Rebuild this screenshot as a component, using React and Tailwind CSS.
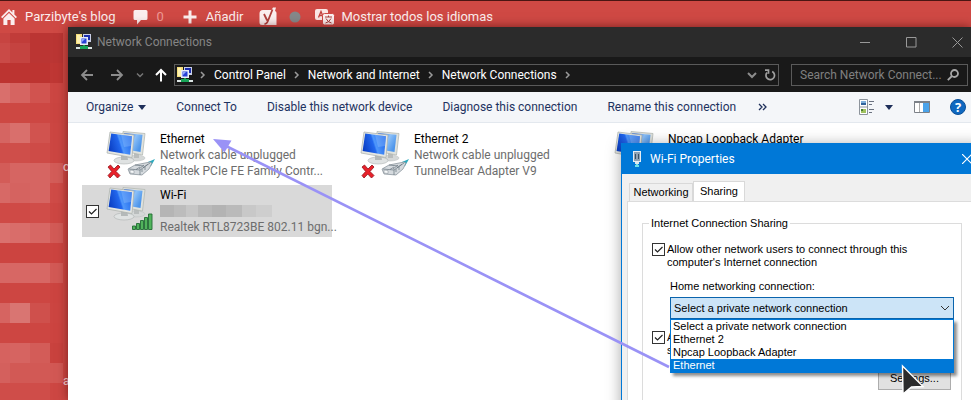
import React from 'react';

const mosaic = [
  ['h-[10px]', 'bg-[#c74441]', 'bg-[#c13c39]', 'bg-[#bb3533]', 'bg-[#bb3634]'],
  ['h-[20px]', 'bg-[#ca4a47]', 'bg-[#c54340]', 'bg-[#bb3533]', 'bg-[#bb3634]'],
  ['h-[20px]', 'bg-[#bd3431]', 'bg-[#bd3431]', 'bg-[#bd3431]', 'bg-[#bf3734]'],
  ['h-[20px]', 'bg-[#d96f6c]', 'bg-[#d66461]', 'bg-[#d1534f]', 'bg-[#cc4642]'],
  ['h-[20px]', 'bg-[#cd4843]', 'bg-[#cd4843]', 'bg-[#cd4743]', 'bg-[#cb4541]'],
  ['h-[20px]', 'bg-[#d56562]', 'bg-[#d96f6c]', 'bg-[#d1534f]', 'bg-[#cc4642]'],
  ['h-[20px]', 'bg-[#cf4e4a]', 'bg-[#cf4e4a]', 'bg-[#ce4b47]', 'bg-[#cc4642]'],
  ['h-[20px]', 'bg-[#d35c58]', 'bg-[#d66562]', 'bg-[#d66562]', 'bg-[#d35c58]'],
  ['h-[20px]', 'bg-[#d76966]', 'bg-[#d56360]', 'bg-[#d66562]', 'bg-[#cf4b47]'],
  ['h-[20px]', 'bg-[#cf4a46]', 'bg-[#cf4a46]', 'bg-[#d04d49]', 'bg-[#cd4743]'],
  ['h-[20px]', 'bg-[#da716e]', 'bg-[#d96d6a]', 'bg-[#d76764]', 'bg-[#d25a56]'],
  ['h-[20px]', 'bg-[#cc4440]', 'bg-[#cc4440]', 'bg-[#cc4440]', 'bg-[#cc4440]'],
  ['h-[20px]', 'bg-[#d76764]', 'bg-[#d76764]', 'bg-[#d76764]', 'bg-[#d25955]'],
  ['h-[20px]', 'bg-[#cc4541]', 'bg-[#cd4642]', 'bg-[#cd4642]', 'bg-[#cc4440]'],
  ['h-[20px]', 'bg-[#d66461]', 'bg-[#d97572]', 'bg-[#cf504c]', 'bg-[#cc4541]'],
  ['h-[20px]', 'bg-[#cd4743]', 'bg-[#cd4642]', 'bg-[#cd4642]', 'bg-[#cc4440]'],
  ['h-[20px]', 'bg-[#d6625f]', 'bg-[#d66461]', 'bg-[#d35c58]', 'bg-[#c9423e]'],
  ['h-[20px]', 'bg-[#d4605d]', 'bg-[#d25955]', 'bg-[#d25955]', 'bg-[#d25854]'],
  ['h-[20px]', 'bg-[#cf4d49]', 'bg-[#cf4d49]', 'bg-[#cf4d49]', 'bg-[#cd4743]'],
];

const edgeText = { 7: 'os', 17: 'a' };

const Mosaic = () => (
  <div className="w-[68px] shrink-0 pt-[6px]">
    {mosaic.map(([height, a, b, c, d], i) => (
      <div key={i} className={`flex ${height}`}>
        <div className={`w-[10px] ${a}`} />
        <div className={`w-[20px] ${b}`} />
        <div className={`w-[20px] ${c}`} />
        <div className={`w-[13px] ${d}`} />
        <div className={`w-[5px] text-xs text-red-100 ${i === 7 ? 'leading-[8px]' : 'leading-9'}`}>{edgeText[i]}</div>
      </div>
    ))}
  </div>
);

const AdminBar = () => (
  <header className="flex h-[27px] items-start border-t border-[#4a1512] pt-[7px] pl-px text-[13px] leading-[18px] text-[#fbeeee]">
    <a href="#home" className="flex items-center gap-2">
      <svg className="h-4 w-4" viewBox="0 0 16 16" fill="currentColor">
        <path d="M8 0 0 8l1.3 1.2L8 2.6l6.700 6.600L16 8l-2.600-2.600V1h-2v2.400z" />
        <path d="M8 4 2.400 9.600V16h4v-5h3.200v5h4V9.600z" />
      </svg>
      Parzibyte's blog
    </a>
    <a href="#comments" className="ml-[17px] flex items-center gap-2 text-[#ef9a96]">
      <svg className="h-4 w-4" viewBox="0 0 16 16" fill="#fbeeee">
        <path d="M2 1h11q1.500 0 1.500 1.500v7q0 1.500-1.500 1.500H8l-4 4.500V11H2Q.5 11 .5 9.500v-7Q.5 1 2 1z" />
      </svg>
      0
    </a>
    <a href="#new" className="ml-[18px] flex items-center gap-2">
      <svg className="h-4 w-4" viewBox="0 0 16 16" fill="currentColor">
        <path d="M6.500 1.500h3v5h5v3h-5v5h-3v-5h-5v-3h5z" />
      </svg>
      Añadir
    </a>
    <a href="#seo" aria-label="SEO" className="ml-4 flex h-[18px] items-center gap-3">
      <svg className="h-[20px] w-[18px]" viewBox="0 0 18 20">
        <path d="M4 3h8.500L14 .5h3L16 4q1.500.6 1.500 2v12H3q-2.500 0-2.500-2.500v-9Q.5 3 4 3z" fill="#fbeeee" />
        <path d="M5 7l3.200 6.500M13.500 2.500 8.700 14.500q-1 2.500-3.200 2.500" fill="none" stroke="#b0403c" strokeWidth="1.800" />
      </svg>
      <svg className="h-[12px] w-[12px]" viewBox="0 0 12 12">
        <circle cx="6" cy="6" r="5.500" fill="#85888a" />
      </svg>
    </a>
    <a href="#languages" className="ml-[14px] flex items-center gap-[6px]">
      <svg className="h-4 w-5" viewBox="0 0 20 16">
        <rect x="0" y="0" width="13" height="11" rx="2" fill="#fbe6e4" />
        <path d="M3.500 8.500 6 2.500 8.500 8.500M4.500 6.500h3" fill="none" stroke="#c2413d" strokeWidth="1.300" />
        <rect x="7.500" y="4.500" width="12" height="11.500" rx="2" fill="#fbeeee" stroke="#cf4944" />
        <path d="M10 8h7M13.500 6.500V8M11 9.500q2 4 5.500 4.500M16 9.500q-2 4-5.500 4.500" fill="none" stroke="#a83c39" />
      </svg>
      Mostrar todos los idiomas
    </a>
  </header>
);

const NetworkIcon = () => (
  <svg className="h-4 w-4 shrink-0" viewBox="0 0 16 16">
    <path d="M0 0h6v10H0z" fill="#f6df7c" />
    <path d="M1 1h3v8H1z" fill="#fdf1b0" />
    <rect x="7" y="0" width="8" height="8" fill="#c9cfe6" />
    <rect x="8" y="1" width="6" height="5" fill="#1c2fae" />
    <rect x="4" y="3" width="8" height="8" fill="#e8ecf7" />
    <rect x="5.500" y="4.500" width="5" height="5" fill="#2740d4" />
    <path d="M6 5h3L6 8z" fill="#8fa6ff" />
    <path d="M7 11h2v2H7z" fill="#16a34a" />
    <path d="M4 12h8v3H4z" fill="#18a558" />
    <path d="M0 13h4v2H0zM12 13h4v2h-4z" fill="#dce5e4" />
  </svg>
);

const Chevron = () => (
  <svg className="h-2 w-2 shrink-0" viewBox="0 0 8 8" fill="none" stroke="#9a9a9a" strokeWidth="1.500">
    <path d="M2 1l3 3-3 3" />
  </svg>
);

const TitleBar = () => (
  <div className="flex h-[30px] items-center bg-[#2b2b2b] pl-2 pr-[8px] text-[#858585]">
    <NetworkIcon />
    <h1 className="ml-[5px] flex-1">Network Connections</h1>
    <div className="flex gap-[35px]">
      <button aria-label="Minimize">
        <svg className="h-[11px] w-[11px]" viewBox="0 0 11 11" stroke="#999" fill="none"><path d="M0 5.500h10" /></svg>
      </button>
      <button aria-label="Maximize">
        <svg className="h-[11px] w-[11px]" viewBox="0 0 11 11" stroke="#999" fill="none"><path d="M.5.5h9.500v9.500H.5z" /></svg>
      </button>
      <button aria-label="Close">
        <svg className="h-[11px] w-[11px]" viewBox="0 0 11 11" stroke="#999" fill="none"><path d="M.5.5l10 10M10.500.5l-10 10" /></svg>
      </button>
    </div>
  </div>
);

const NavBar = () => (
  <div className="flex h-[35px] items-center bg-[#191919] pl-[12px] pr-[3px] text-white">
    <button aria-label="Back">
      <svg className="h-[14px] w-[14px]" viewBox="0 0 14 14" fill="none" stroke="#8c8c8c" strokeWidth="1.800"><path d="M13 7H2M7 2 2 7l5 5" /></svg>
    </button>
    <button aria-label="Forward" className="ml-4">
      <svg className="h-[14px] w-[14px]" viewBox="0 0 14 14" fill="none" stroke="#8c8c8c" strokeWidth="1.800"><path d="M1 7h11M7 2l5 5-5 5" /></svg>
    </button>
    <button aria-label="Recent locations" className="ml-3">
      <svg className="h-2 w-2" viewBox="0 0 8 8" fill="none" stroke="#777" strokeWidth="1.500"><path d="M1 2.500l3 3 3-3" /></svg>
    </button>
    <button aria-label="Up" className="ml-[10px]">
      <svg className="h-[14px] w-[14px]" viewBox="0 0 14 14" fill="none" stroke="#fff" strokeWidth="2"><path d="M7 13.500V2M2 7l5-5 5 5" /></svg>
    </button>
    <nav className="ml-[6px] flex h-[22px] min-w-0 flex-1 items-center border border-[#5a5a5a] pl-[2px] pr-[2px]">
      <NetworkIcon />
      <div className="ml-[6px] flex flex-1 items-center gap-[7px] whitespace-nowrap">
        <Chevron />
        <a href="#control-panel">Control Panel</a>
        <Chevron />
        <a href="#network">Network and Internet</a>
        <Chevron />
        <a href="#connections">Network Connections</a>
        <Chevron />
      </div>
      <button aria-label="Previous locations">
        <svg className="h-[10px] w-[10px]" viewBox="0 0 10 10" fill="none" stroke="#8c8c8c" strokeWidth="2"><path d="M1 3l4 4 4-4" /></svg>
      </button>
      <button aria-label="Refresh" className="ml-[7px]">
        <svg className="h-3 w-3" viewBox="0 0 12 12" fill="none" stroke="#a0a0a0" strokeWidth="1.700"><path d="M8.200 2.500A4.300 4.300 0 1 1 3 3.500M1 1.200h3.500v3.600" /></svg>
      </button>
    </nav>
    <div className="ml-3 flex h-[22px] w-[177px] items-center border border-[#5a5a5a] px-2">
      <input aria-label="Search Network Connections" placeholder="Search Network Connect..." className="min-w-0 flex-1 bg-transparent outline-none placeholder:text-[#808080]" />
      <svg className="h-3 w-3 shrink-0" viewBox="0 0 12 12" fill="none" stroke="#a8a8a8" strokeWidth="1.800"><circle cx="7.500" cy="4.500" r="3.500" /><path d="M5 7 .8 11.200" /></svg>
    </div>
  </div>
);

const CaretDown = () => (
  <svg className="h-[5px] w-2" viewBox="0 0 8 5" fill="#1e2f5a"><path d="M0 0h8L4 5z" /></svg>
);

const CommandBar = () => (
  <div className="flex h-[31px] items-center justify-between border-b border-[#e3e8ee] bg-[#f4f6f9] pl-[18px] pr-[5px] text-[#1e3260] whitespace-nowrap">
    <div className="flex items-center gap-[30px]">
      <button className="flex items-center gap-[5px]">Organize <CaretDown /></button>
      <button>Connect To</button>
      <button>Disable this network device</button>
      <button>Diagnose this connection</button>
      <button>Rename this connection</button>
      <button aria-label="More commands">
        <svg className="-ml-2 h-2 w-[9px]" viewBox="0 0 9 8" fill="none" stroke="#1e2f5a" strokeWidth="1.300"><path d="M1 1l3 3-3 3M5 1l3 3-3 3" /></svg>
      </button>
    </div>
    <div className="flex items-center">
      <button aria-label="Change your view" className="flex items-center gap-[10px]">
        <svg className="h-4 w-4" viewBox="0 0 16 16">
          <path d="M.5.5h8v15h-8zM.5 8h8" fill="#fff" stroke="#8d949c" />
          <rect x="2" y="2" width="5" height="4" fill="#7fb0dc" />
          <path d="M2 4h5v2H2z" fill="#31639c" />
          <rect x="2" y="10" width="5" height="4" fill="#9fc25e" />
          <path d="M2 10h2v2H2z" fill="#4a7a2e" />
          <path d="M10 2.500h5M10 5.500h3M10 10.500h5M10 13.500h3" stroke="#6b7280" />
        </svg>
        <CaretDown />
      </button>
      <button aria-label="Preview pane" className="ml-[21px]">
        <svg className="h-3 w-4" viewBox="0 0 16 12">
          <path d="M.5.5h15v11H.5z" fill="#fff" stroke="#7c8188" />
          <path d="M0 0h16v2H0z" fill="#7c8188" />
          <path d="M5.500 2v9" stroke="#aaa" />
          <path d="M9 2h6v9H9z" fill="#4aa3ea" />
        </svg>
      </button>
      <button aria-label="Help" className="ml-5">
        <svg className="h-4 w-4" viewBox="0 0 16 16">
          <circle cx="8" cy="8" r="7.500" fill="#0f68c0" stroke="#0b4f98" />
          <text x="8" y="12.500" textAnchor="middle" fill="#fff" fontSize="13" fontWeight="700" fontFamily="Open Sans, sans-serif">?</text>
        </svg>
      </button>
    </div>
  </div>
);

const AdapterIcon = ({ status }) => (
  <svg className="h-[52px] w-[52px] shrink-0" viewBox="0 0 52 52">
    <defs>
      <linearGradient id="screen" x1="0" y1="0.6" x2="1" y2="0.3">
        <stop offset="0" stopColor="#0b3fc4" />
        <stop offset="0.450" stopColor="#2268ee" />
        <stop offset="0.520" stopColor="#4f97fb" />
        <stop offset="1" stopColor="#1f66ea" />
      </linearGradient>
      <linearGradient id="backScreen" x1="0" y1="0" x2="1" y2="0.500">
        <stop offset="0" stopColor="#1d5cdc" />
        <stop offset="0.600" stopColor="#8cc0f8" />
        <stop offset="1" stopColor="#4d95ea" />
      </linearGradient>
    </defs>
    <ellipse cx="32" cy="29" rx="9" ry="3" fill="#d5d8d8" stroke="#b7bcbc" strokeWidth="0.500" />
    <path d="M30 23h5v6h-5z" fill="#b9bdbd" />
    <path d="M19 2.500 41 4.500 38.500 26 18 22z" fill="#dfe2de" stroke="#aeb3ae" strokeWidth="0.700" />
    <path d="M20 4 38.500 5.800 36.500 23 19 20z" fill="url(#backScreen)" />
    <ellipse cx="20" cy="31.500" rx="10" ry="3.500" fill="#dfe2e2" stroke="#adb2b2" strokeWidth="0.600" />
    <path d="M17 25h6l1 6h-7z" fill="#b4b9b9" />
    <path d="M6 3 30 6 28 28.500 3 24z" fill="#e4e6e2" stroke="#a9afab" strokeWidth="0.700" />
    <path d="M7.200 4.500 28 7.200 26.200 25.800 4.600 22z" fill="url(#screen)" />
    <path d="M17 5.800 28 7.200 27 17 20 18z" fill="#9cc8ff" opacity="0.350" />
    {status === 'unplugged' ? (
      <>
        <path d="m44 33 7-3-4 7-3 1z" fill="#2aa9bd" />
        <path d="m24 40 7-4 15-3 2 1-3 6-7 6-12-1z" fill="#d5dade" stroke="#808b94" strokeWidth="0.700" />
        <path d="m25 40 11 1 10-7M36 41v5M31 36l9 1m-4 1-4 2.500m8-4.500-5 4m9-5-5 4m-1 1v3m3-5v3" fill="none" stroke="#66727c" strokeWidth="0.700" />
        <path d="m26 41 4 .5v3l-4-.5z" fill="#f6f8f9" stroke="#7d878f" strokeWidth="0.500" />
        <path d="m4 38 2.500-2 3.500 4 4-4 2 2-4 4.500 4 4-2.500 2.500-3.700-4-3.800 4-2-2.500 3.700-4z" fill="#e8212a" stroke="#93131a" strokeWidth="0.800" />
      </>
    ) : (
      <g fill="#51b45c" stroke="#236b34" strokeWidth="0.900">
        <path d="M28.500 41h3v3.500h-3z" />
        <path d="M32.500 38.500h3v6h-3z" />
        <path d="M36.500 35.500h3v9h-3z" />
        <path d="M40.500 32.500h3v12h-3z" />
        <path d="M44.500 29h3.500v15.500h-3.500z" />
      </g>
    )}
  </svg>
);

const CheckBox = (props) => (
  <span className="grid h-[13px] w-[13px] shrink-0">
    <input type="checkbox" defaultChecked className="col-start-1 row-start-1 h-[13px] w-[13px] appearance-none border border-[#333] bg-white" {...props} />
    <svg className="pointer-events-none col-start-1 row-start-1 h-[13px] w-[13px]" viewBox="0 0 13 13" fill="none" stroke="#222" strokeWidth="1.200">
      <path d="M3 6.500l2.500 2.500L10.500 4" />
    </svg>
  </span>
);

const HiddenName = () => (
  <span className="flex h-4 items-center" aria-hidden="true">
    <span className="h-3 w-[14px] bg-[#b5b5b5]" />
    <span className="h-3 w-[12px] bg-[#bcbcbc]" />
    <span className="h-3 w-[12px] bg-[#c6c6c6]" />
    <span className="h-3 w-[14px] bg-[#b9b9b9]" />
    <span className="h-3 w-[14px] bg-[#b3b3b3]" />
    <span className="h-3 w-[16px] bg-[#bababa]" />
    <span className="h-3 w-[14px] bg-[#c8c8c8]" />
    <span className="h-3 w-[16px] bg-[#cecece]" />
  </span>
);

const adapters = [
  { name: 'Ethernet', state: 'Network cable unplugged', device: 'Realtek PCIe FE Family Contr...', status: 'unplugged' },
  { name: 'Ethernet 2', state: 'Network cable unplugged', device: 'TunnelBear Adapter V9', status: 'unplugged' },
  { name: 'Npcap Loopback Adapter', status: 'wifi' },
  { name: 'Wi-Fi', masked: true, device: 'Realtek RTL8723BE 802.11 bgn...', status: 'wifi', selected: true },
];

const AdapterList = () => (
  <ul className="grid grid-cols-[repeat(3,250px)] gap-1 pl-[14px] pt-[6px]">
    {adapters.map((a) => (
      <li key={a.name} className={`flex h-[52px] ${a.selected ? 'bg-[#d9d9d9]' : ''}`}>
        <div className="flex w-[22px] shrink-0 items-center pl-1">
          {a.selected && <CheckBox aria-label={a.name} />}
        </div>
        <AdapterIcon status={a.status} />
        <div className="ml-1 pt-[2px] leading-4 whitespace-nowrap text-[#6d6d6d]">
          <p className="text-black">{a.name}</p>
          {a.masked ? <HiddenName /> : <p>{a.state}</p>}
          <p>{a.device}</p>
        </div>
      </li>
    ))}
  </ul>
);

const options = ['Select a private network connection', 'Ethernet 2', 'Npcap Loopback Adapter', 'Ethernet'];

const PropertiesDialog = () => (
  <section className="absolute left-[621px] top-[143px] w-[362px] border border-[#0078d7] bg-[#f0f0f0] pb-10 shadow-[0_2px_14px_rgba(0,0,0,0.35)]">
    <div className="flex h-[30px] items-center bg-[#0078d7] pl-[10px] pr-[10px] text-white">
      <svg className="h-4 w-[10px]" viewBox="0 0 10 16">
        <rect x="1.500" y=".5" width="7" height="10" fill="#8fa2b4" stroke="#e6edf3" />
        <path d="M3.500 3v5M6.500 3v5" stroke="#3b4f63" />
        <path d="M3 11h4v2H3z" fill="#dce6ee" />
        <path d="M4 13h2v2H4zM3 14h4v2H3z" fill="#6fe0e8" />
      </svg>
      <h2 className="ml-2 flex-1">Wi-Fi Properties</h2>
      <button aria-label="Close properties">
        <svg className="h-[10px] w-[10px]" viewBox="0 0 10 10" stroke="#fff" fill="none" strokeWidth="1.200"><path d="M0 0l10 10M10 0 0 10" /></svg>
      </button>
    </div>
    <div className="px-[5px] pt-[7px] text-[11px] leading-[13px] text-black font-['Liberation_Sans',Arial,sans-serif]">
      <div role="tablist" className="flex items-end pl-[2px]">
        <button role="tab" className="h-[18px] w-[64px] border border-b-0 border-[#d9d9d9] bg-[#f0f0f0] text-center">Networking</button>
        <button role="tab" aria-selected="true" className="h-[20px] w-[52px] border-x border-t border-[#d9d9d9] bg-white text-center">Sharing</button>
      </div>
      <div role="tabpanel" className="border border-[#dcdcdc] bg-white px-[14px] pt-[15px] pb-6">
        <fieldset className="border border-[#dcdcdc] pl-[9px] pr-[7px] pb-6">
          <legend className="-ml-[3px] px-[2px]">Internet Connection Sharing</legend>
          <label className="mt-[13px] flex items-start gap-[2px]">
            <CheckBox />
            <span>Allow other network users to connect through this<br />computer's Internet connection</span>
          </label>
          <div className="relative mt-[11px] pl-[18px]">
            <label htmlFor="home" className="block">Home networking connection:</label>
            <div className="mt-1 grid">
              <select id="home" className="col-start-1 row-start-1 h-[22px] w-full appearance-none border border-[#0a64ad] bg-[#cce4f7] pl-[3px] outline-none">
                {options.map((o) => <option key={o}>{o}</option>)}
              </select>
              <svg className="pointer-events-none col-start-1 row-start-1 mr-1 h-[10px] w-[10px] self-center justify-self-end" viewBox="0 0 10 10" fill="none" stroke="#333"><path d="M1 3l4 4 4-4" /></svg>
            </div>
            <ul role="listbox" aria-label="Connections" className="absolute left-[18px] right-0 top-full z-20 border border-[#0078d7] bg-white shadow-[3px_3px_3px_rgba(0,0,0,0.45)]">
              {options.map((o, i) => (
                <li key={o} role="option" aria-selected={i === 3} className={`px-[2px] ${i === 3 ? 'bg-[#0078d7] text-white' : ''}`}>{o}</li>
              ))}
            </ul>
          </div>
          <label className="mt-3 flex items-start gap-[2px]">
            <CheckBox />
            <span>Allow other network users to control or disable the<br />shared Internet connection</span>
          </label>
          <div className="mt-[10px] flex justify-end pr-[3px]">
            <button className="h-[23px] w-[73px] border border-[#adadad] bg-[#e1e1e1]">Settings...</button>
          </div>
        </fieldset>
      </div>
    </div>
  </section>
);

const Annotations = () => (
  <svg className="pointer-events-none absolute left-0 top-0 z-30 h-[400px] w-[971px]" viewBox="0 0 971 400">
    <path d="M226 146 669 367" stroke="#9a92f6" strokeWidth="2.600" />
    <path d="m213 139 18.500 1.500-7 12z" fill="#9a92f6" />
    <path d="m902.500 366 20.500 20.500-11.500.5-8.500 7z" fill="#2b2b2b" stroke="#fff" strokeWidth="1.400" />
  </svg>
);

export default function App() {
  return (
    <div className="relative min-h-screen overflow-hidden bg-[#cf4944] text-xs font-[Roboto,sans-serif]">
      <AdminBar />
      <div className="flex h-[calc(100vh-27px)]">
        <Mosaic />
        <main className="relative flex min-w-0 flex-1 flex-col bg-white shadow-[0_0_10px_rgba(60,0,0,0.6)]">
          <TitleBar />
          <NavBar />
          <CommandBar />
          <AdapterList />
        </main>
      </div>
      <PropertiesDialog />
      <Annotations />
    </div>
  );
}
